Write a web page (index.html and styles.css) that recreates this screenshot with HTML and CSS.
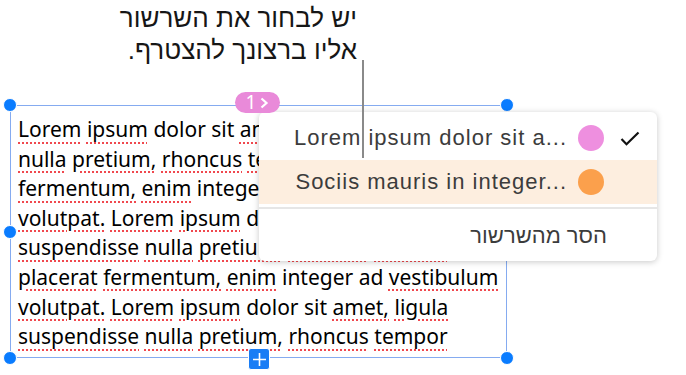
FILE: index.html
```html
<!DOCTYPE html>
<html lang="he">
<head>
    <meta charset="UTF-8">
    <meta name="viewport" content="width=device-width, initial-scale=1.0">
    <title>שרשור</title>
    <link rel="stylesheet" href="styles.css">
</head>
<body>

    <div class="page">
        <!-- הסבר מעל התמונה -->
        <div class="callout" dir="rtl">
            יש לבחור את השרשור<br>
            אליו ברצונך להצטרף.
        </div>
        <div class="leader"></div>

        <div class="textbox">
            <p class="text">
                <span class="sp">Lorem</span> <span class="sp">ipsum</span> dolor sit <span class="sp">amet,</span> <span class="sp">ligula</span><br>
                <span class="sp">nulla</span> <span class="sp">pretium,</span> <span class="sp">rhoncus</span> <span class="sp">tempor</span><br>
                <span class="sp">fermentum,</span> <span class="sp">enim</span> integer ad <span class="sp">vestibulum</span><br>
                <span class="sp">volutpat.</span> <span class="sp">Lorem</span> <span class="sp">ipsum</span> dolor sit <span class="sp">amet,</span> <span class="sp">ligula</span><br>
                <span class="sp">suspendisse</span> <span class="sp">nulla</span> <span class="sp">pretium,</span> <span class="sp">rhoncus</span> <span class="sp">tempor</span><br>
                <span class="sp">placerat</span> <span class="sp">fermentum,</span> <span class="sp">enim</span> integer ad <span class="sp">vestibulum</span><br>
                <span class="sp">volutpat.</span> <span class="sp">Lorem</span> <span class="sp">ipsum</span> dolor sit <span class="sp">amet,</span> <span class="sp">ligula</span><br>
                <span class="sp">suspendisse</span> <span class="sp">nulla</span> <span class="sp">pretium,</span> <span class="sp">rhoncus</span> <span class="sp">tempor</span>
            </p>

            <span class="handle top-left"></span>
            <span class="handle top-right"></span>
            <span class="handle mid-left"></span>
            <span class="handle bottom-left"></span>
            <span class="handle bottom-right"></span>

            <button class="add">
                <svg width="15" height="15" viewBox="0 0 15 15"><path d="M7.5 1v13M1 7.5h13" stroke="#fff" stroke-width="1.6"/></svg>
            </button>
        </div>

        <div class="menu" dir="rtl">
            <div class="item">
                <span class="check">
                    <svg width="20" height="15" viewBox="0 0 20 15"><path d="M1.5 8l5 5.2L18.5 1.5" fill="none" stroke="#111" stroke-width="2.2"/></svg>
                </span>
                <span class="dot pink"></span>
                <span class="label" dir="ltr">Lorem ipsum dolor sit a...</span>
            </div>
            <div class="item current">
                <span class="check"></span>
                <span class="dot orange"></span>
                <span class="label" dir="ltr">Sociis mauris in integer...</span>
            </div>
            <div class="sep"></div>
            <div class="item remove">
                <span class="label">הסר מהשרשור</span>
            </div>
        </div>

        <span class="badge">1 <svg width="10" height="12" viewBox="0 0 10 12"><path d="M2.5 1.5l5 4.5-5 4.5" fill="none" stroke="#fff" stroke-width="2.2"/></svg></span>
    </div>

</body>
</html>
```

FILE: styles.css
```css
/* צילום מסך: בחירת שרשור */
body {
    margin: 0;
    background-color: #fff;
    font-family: "Liberation Sans", Arial, sans-serif;
}

.page {
    position: relative;
    width: 686px;
    height: 375px;
    overflow: hidden;
}

.callout {
    padding: 2px 329px 0 0;
    font-size: 26px;
    line-height: 32px;
    color: #161616;
    text-align: right;
    height: 105px;
    box-sizing: border-box;
}

.leader {
    position: absolute;
    left: 362px;
    top: 60px;
    width: 2px;
    height: 98px;
    background-color: #8a8a8a;
    z-index: 3;
}

.textbox {
    position: relative;
    margin-left: 10px;
    width: 497px;
    height: 253px;
    border: 1px solid #85abf0;
    box-sizing: border-box;
}

.text {
    margin: 0;
    padding: 9px 0 0 7px;
    font-family: "Noto Sans", sans-serif;
    font-size: 21px;
    line-height: 29.6px;
    color: #000;
    white-space: nowrap;
}

.sp {
    text-decoration: underline dotted #f0484e;
    text-decoration-thickness: 2px;
    text-underline-offset: 5px;
}

.handle {
    position: absolute;
    width: 12px;
    height: 12px;
    border-radius: 50%;
    background-color: #0a7cff;
    border: 1px solid #fff;
}

.top-left { left: -8px; top: -8px; }
.top-right { right: -8px; top: -8px; }
.mid-left { left: -8px; top: 119px; }
.bottom-left { left: -8px; bottom: -8px; }
.bottom-right { right: -8px; bottom: -8px; }

.add {
    position: absolute;
    left: 237px;
    bottom: -13px;
    width: 22px;
    height: 22px;
    padding: 0;
    border: 1px solid #fff;
    border-radius: 3px;
    background-color: #1a7df5;
    display: flex;
    align-items: center;
    justify-content: center;
}

.badge {
    position: absolute;
    left: 235px;
    top: 92px;
    width: 45px;
    height: 21px;
    border-radius: 11px;
    background-color: #e98ad9;
    color: #fff;
    font-family: "Noto Sans", sans-serif;
    font-size: 19px;
    line-height: 21px;
    display: flex;
    align-items: center;
    justify-content: center;
    gap: 3px;
    z-index: 4;
}

.menu {
    position: absolute;
    left: 259px;
    top: 112px;
    width: 398px;
    padding: 4px 0 3px;
    background-color: #fff;
    border-radius: 6px;
    box-shadow: 0 1px 6px rgba(0, 0, 0, 0.22);
    font-family: "Liberation Sans", Arial, sans-serif;
    font-size: 22px;
    letter-spacing: 1px;
    color: #3c3c3c;
    z-index: 2;
}

.item {
    display: flex;
    align-items: center;
    height: 44px;
    padding-right: 17px;
}

.item.current {
    background-color: #fdeedf;
}

.check {
    width: 20px;
    height: 15px;
    display: flex;
}

.dot {
    width: 26px;
    height: 26px;
    border-radius: 50%;
    margin-right: 16px;
}

.dot.pink { background-color: #ee8fdf; }
.dot.orange { background-color: #fba04c; }

.label {
    margin-right: 11px;
}

.sep {
    height: 2px;
    margin: 3px 0 5px;
    background-color: #e6e6e6;
}

.item.remove {
    padding-right: 50px;
}

.item.remove .label {
    margin: 0;
    letter-spacing: 0;
}
```
